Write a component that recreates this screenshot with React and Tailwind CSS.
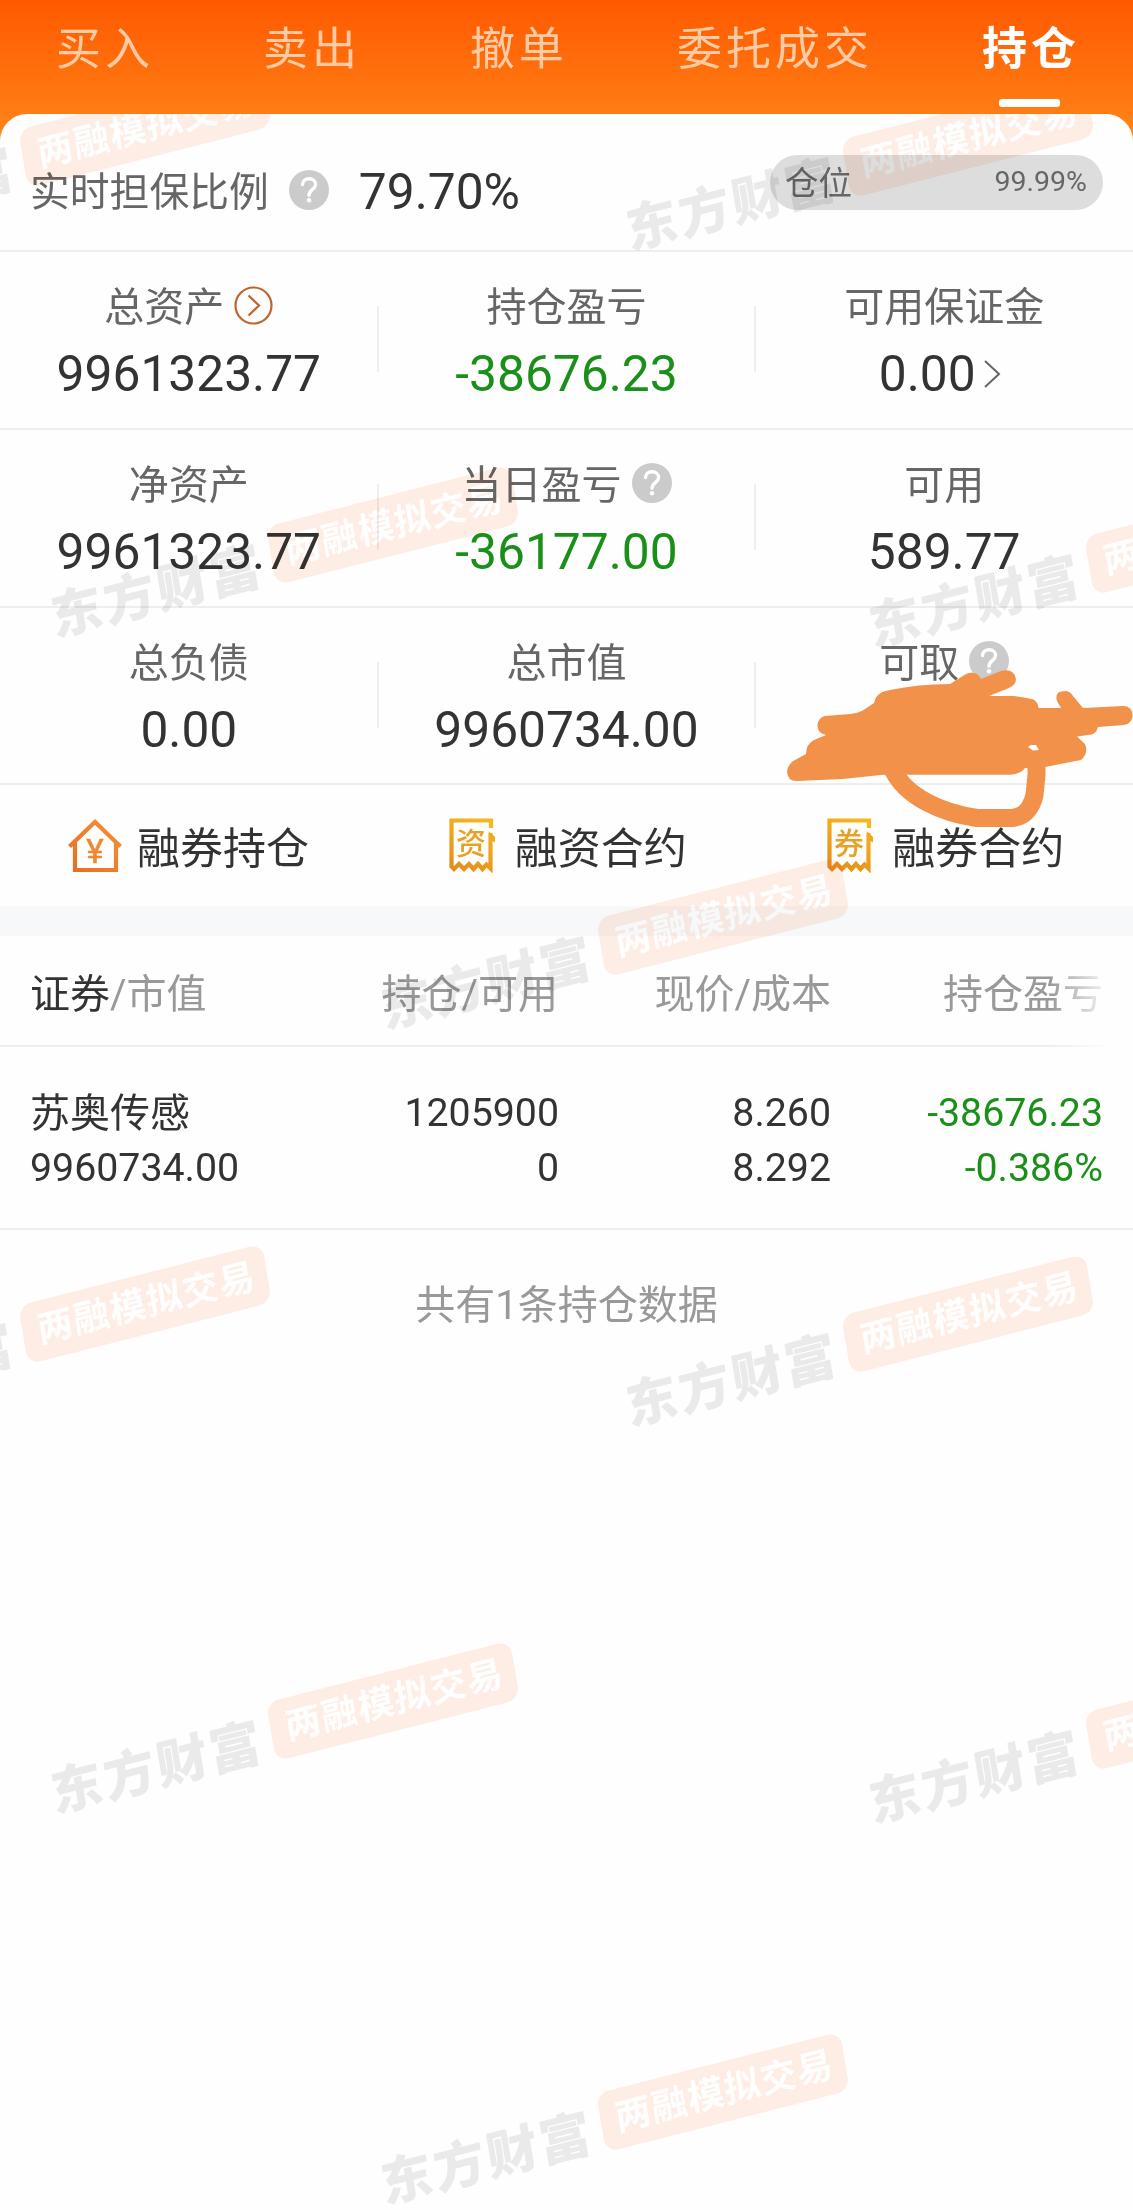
import React from 'react';

const tabs = ['买入', '卖出', '撤单', '委托成交', '持仓'];

const stats = [
    [
        { label: '总资产', value: '9961323.77', icon: 'circle' },
        { label: '持仓盈亏', value: '-38676.23', green: true },
        { label: '可用保证金', value: '0.00', arrow: true },
    ],
    [
        { label: '净资产', value: '9961323.77' },
        { label: '当日盈亏', value: '-36177.00', green: true, icon: 'help' },
        { label: '可用', value: '589.77' },
    ],
    [
        { label: '总负债', value: '0.00' },
        { label: '总市值', value: '9960734.00' },
        { label: '可取', value: '', icon: 'help' },
    ],
];

const watermarks = [
    'left-[145.500px] top-[14px]',
    'left-[968px] top-[24px]',
    'left-[393px] top-[411px]',
    'left-[1211px] top-[421px]',
    'left-[723px] top-[803px]',
    'left-[145.500px] top-[1190px]',
    'left-[968px] top-[1200px]',
    'left-[393px] top-[1587px]',
    'left-[1211px] top-[1597px]',
    'left-[723px] top-[1978px]',
];

function HelpIcon() {
    return (
        <svg className="w-10 h-10 shrink-0" viewBox="0 0 40 40" fill="none">
            <circle cx="20" cy="20" r="20" fill="#cbcbcb" />
            <path d="M13.5 14.5C13.5 10.8 16.3 8.8 20.2 8.8C24 8.8 26.6 11.2 26.6 14.5C26.6 19.3 20 19.5 20 25.2" stroke="#fff" strokeWidth="3.4" strokeLinecap="round" />
            <circle cx="20" cy="30.3" r="2.3" fill="#fff" />
        </svg>
    );
}

function CircleArrow() {
    return (
        <svg className="w-[39px] h-[39px] shrink-0" viewBox="0 0 39 39" fill="none" stroke="#c0642a" strokeWidth="2.2">
            <circle cx="19.5" cy="19.5" r="18" />
            <path d="M14.5 9.5L25 19.5L14.5 29.5" />
        </svg>
    );
}

function Chevron() {
    return (
        <svg className="w-[17px] h-[28px] shrink-0" viewBox="0 0 17 28" fill="none" stroke="#666" strokeWidth="2">
            <path d="M1 1L15 14L1 27" />
        </svg>
    );
}

function HouseIcon() {
    return (
        <svg className="w-[54px] h-[54px] shrink-0" viewBox="0 0 54 54" fill="none">
            <defs>
                <linearGradient id="house" x1="0" y1="1" x2="1" y2="0">
                    <stop offset="0" stopColor="#e66e20" />
                    <stop offset="1" stopColor="#f2933a" />
                </linearGradient>
            </defs>
            <path d="M1.5 27.5L27 3L52.5 27.5M7 23V51H48V23" stroke="url(#house)" strokeWidth="4.2" />
            <text x="27" y="43.5" textAnchor="middle" fontSize="33" fill="#ee8a32" stroke="#ee8a32" strokeWidth="0.6" className="font-[Roboto,sans-serif]">¥</text>
        </svg>
    );
}

function ReceiptIcon({ char }) {
    return (
        <svg className="w-[48px] h-[55px] shrink-0" viewBox="0 0 48 55" fill="none">
            <defs>
                <linearGradient id={'receipt' + char} gradientUnits="userSpaceOnUse" x1="0" y1="55" x2="28" y2="0">
                    <stop offset="0" stopColor="#e5871a" />
                    <stop offset="1" stopColor="#f5b71e" />
                </linearGradient>
            </defs>
            <path
                d="M42 10V2.500H2.500V48.500L5 51L10 46L15 51L20 46L24.500 51L29 46L33.500 51L37.500 46.500L41.500 50.500V15"
                stroke={'url(#receipt' + char + ')'}
                strokeWidth="4.2"
            />
            <path d="M39.500 13L46 19V24.500L42 22Z" fill="#f0a81c" />
            <text x="22" y="35.500" textAnchor="middle" fontSize="30" fill="#e9a125" className="font-['Noto_Sans_CJK_SC',sans-serif] font-medium">{char}</text>
        </svg>
    );
}

function Stat({ item, divider }) {
    return (
        <div className="relative flex-1 flex flex-col items-center pt-[31px]">
            <div className="h-[46px] flex items-center gap-[10px] text-[40px] leading-none text-[#666]">
                <span className="pt-[4px]">{item.label}</span>
                {item.icon === 'help' && <span className="mt-[-2px]"><HelpIcon /></span>}
                {item.icon === 'circle' && <span className="mt-[-1px]"><CircleArrow /></span>}
            </div>
            <div className={'mt-[21px] h-[50px] flex items-center gap-[8px] text-[49.700px] leading-none ' + (item.green ? 'text-[#1a901a]' : 'text-[#333]')}>
                <span>{item.value}</span>
                {item.arrow && <span className="pr-[9px] mt-[-3px]"><Chevron /></span>}
            </div>
            {divider && <div className="absolute right-[-1px] top-[54px] w-[2px] h-[66px] bg-[#eee]" />}
        </div>
    );
}

function Watermark({ position }) {
    return (
        <div className={'absolute ' + position}>
            <div className="absolute right-[-126px] top-[-30px] flex items-center [transform-origin:calc(100%-126px)_50%] [transform:matrix(0.968,-0.246,0.165,0.98,0,0)] whitespace-nowrap leading-none">
                <span className="font-['Noto_Sans_CJK_SC',sans-serif] font-black text-[52px] tracking-[2.500px] text-[#ebebeb] mr-[10px] mt-[5px]">东方财富</span>
                <span className="w-[252px] h-[60px] rounded-[13px] bg-[#ffeee6] flex items-center justify-center pl-[3px] pb-[5px] font-['Noto_Sans_CJK_SC',sans-serif] font-bold text-[36.500px] tracking-[1px] text-white">
                    两融模拟交易
                </span>
            </div>
        </div>
    );
}

// freehand marker over the withdrawable amount
function Scribble() {
    return (
        <svg className="absolute left-[783px] top-[664px] w-[350px] h-[170px]" viewBox="783 664 350 170" fill="#f2914a">
            <path d="M825 716L850 714Q860 713 865 709L874 703Q876 692 890 690Q918 684 950 684L966 674Q977 670 981 679L1001 671Q1014 668 1016 679Q1016 685 1009 688L989 696H1014L1032 699Q1038 701 1038.500 708H1061L1057 701Q1054 691 1065 691Q1070 691 1073 696L1083 708L1123 706Q1132 706 1132.600 715Q1132 724 1124 725L1098 727Q1096 735 1088 735L1077 736.500L1085 744Q1089 753 1081 760L1045 767L1025 768Q1021 774 1010 774.700H883L843 779L797 781Q787 781 787 771Q788 764 795 760L806 754Q806 744 814 740L826 735Q817 733 817.500 725Q818 718 825 716Z" />
            <path d="M893 770C906 797 942 813 977 818H1012C1026 817 1032 806 1034.500 795L1036.500 775Q1037 764 1034 758" fill="none" stroke="#f2914a" strokeWidth="18" />
            <path d="M1028 747L1031 745H1036L1039 750L1033 750.500Z" fill="#fff" />
        </svg>
    );
}

export default function App() {
    return (
        <div className="relative w-[1133px] h-[2210px] overflow-hidden bg-[linear-gradient(#ff5900_0px,#ff7d14_114px,#ff8a1c_150px)] font-[Roboto,'Noto_Sans_CJK_SC',sans-serif]">
            <div className="h-[114px] flex gap-[109px] pl-[56px]">
                {tabs.map((tab) => {
                    const active = tab === '持仓';
                    return (
                        <div key={tab} className="flex flex-col items-center pt-[24px]">
                            <span className={'h-[50px] flex items-center whitespace-nowrap text-[45px] leading-none tracking-[4px] ' + (active ? 'font-bold text-white' : 'text-[#ffcba4]')}>{tab}</span>
                            {active && <span className="mt-[25px] mr-[4px] w-[61px] h-[8px] rounded-[3px] bg-white" />}
                        </div>
                    );
                })}
            </div>

            <div className="relative h-[2096px] overflow-hidden rounded-t-[27px] bg-[#fefefe]">
                <div className="h-[138px] border-b-2 border-[#eee] flex items-center pl-[30px] pr-[30px] pt-[17px]">
                    <span className="pt-[4px] text-[39.800px] leading-none text-[#666]">实时担保比例</span>
                    <span className="ml-[20px] mt-[-2px]"><HelpIcon /></span>
                    <span className="ml-[30px] pt-[4px] text-[49.700px] leading-none text-[#333]">79.70%</span>
                    <div className="ml-auto mb-[16px] w-[333px] h-[55px] rounded-full bg-[#ddd] flex items-center justify-between pl-[15px] pr-[16px] text-[#666] leading-none">
                        <span className="text-[33.500px] pt-[2px]">仓位</span>
                        <span className="text-[28.500px]">99.99%</span>
                    </div>
                </div>

                {stats.map((row, i) => (
                    <div key={i} className={'flex border-b-2 border-[#eee] ' + (i === 2 ? 'h-[177px]' : 'h-[178px]')}>
                        {row.map((item, j) => (
                            <Stat key={item.label} item={item} divider={j < 2} />
                        ))}
                    </div>
                ))}

                <div className="h-[121px] grid grid-cols-3 text-[43px] leading-none text-[#333]">
                    <div className="flex items-center pl-[68px] gap-[15px]"><HouseIcon /><span className="pt-[7px]">融券持仓</span></div>
                    <div className="flex items-center pl-[71px] gap-[18px]"><ReceiptIcon char="资" /><span className="pt-[7px]">融资合约</span></div>
                    <div className="flex items-center pl-[72px] gap-[17px]"><ReceiptIcon char="券" /><span className="pt-[7px]">融券合约</span></div>
                </div>

                <div className="h-[30px] bg-[#f6f8fa]" />

                <div className="relative h-[111px] flex items-center border-b-2 border-[#eee] pl-[30px] pt-[8px] text-[40px] leading-none text-[#999] whitespace-nowrap">
                    <div className="w-[286px]"><span className="text-[#333]">证券</span>/市值</div>
                    <div className="w-[242px] text-right">持仓/可用</div>
                    <div className="w-[273px] text-right">现价/成本</div>
                    <div className="w-[272px] text-right">持仓盈亏</div>
                    <div className="absolute right-0 top-0 w-[83px] h-[113px] bg-[linear-gradient(to_right,transparent,#fefefe_75%)]" />
                </div>

                <div className="h-[183px] border-b-2 border-[#eee] flex pl-[30px] pt-[39px] text-[39.300px] leading-[55px] text-[#333]">
                    <div className="w-[287px]">
                        <div className="text-[40px]">苏奥传感</div>
                        <div>9960734.00</div>
                    </div>
                    <div className="w-[242px] text-right">
                        <div>1205900</div>
                        <div>0</div>
                    </div>
                    <div className="w-[272px] text-right">
                        <div>8.260</div>
                        <div>8.292</div>
                    </div>
                    <div className="w-[272px] text-right text-[#1a901a]">
                        <div>-38676.23</div>
                        <div>-0.386%</div>
                    </div>
                </div>

                <div className="pt-[56px] text-center text-[40px] leading-none text-[#999]">共有1条持仓数据</div>

                <div className="absolute inset-0 pointer-events-none mix-blend-multiply">
                    {watermarks.map((position) => (
                        <Watermark key={position} position={position} />
                    ))}
                </div>
            </div>
            <Scribble />
        </div>
    );
}
